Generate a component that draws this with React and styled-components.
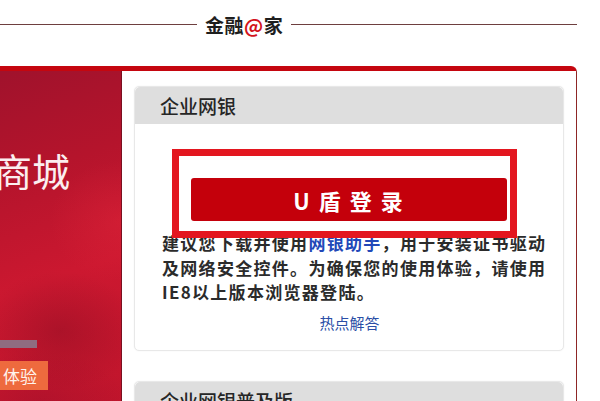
import styled, { createGlobalStyle } from "styled-components";

const GlobalStyle = createGlobalStyle`
  html, body {
    margin: 0;
    padding: 0;
    background: #ffffff;
    overflow: hidden;
  }
  body {
    font-family: "Noto Sans CJK SC", "Noto Sans", sans-serif;
  }
`;

export default function App() {
  return (
    <>
      <GlobalStyle />
      <Page>
        <TopTitle>
          <Rule />
          <TitleText>
            金融<At>@</At>家
          </TitleText>
          <Rule />
        </TopTitle>
        <Frame>
          <Banner>
            <BannerTitle>商城</BannerTitle>
            <BannerBar />
            <TryButton>体验</TryButton>
          </Banner>
          <Side>
            <Card>
              <CardHead>企业网银</CardHead>
              <CardBody>
                <LoginButton type="button">U 盾 登 录</LoginButton>
                <Notice>
                  建议您下载并使用<Link>网银助手</Link>，用于安装证书驱动及网络安全控件。为确保您的使用体验，请使用IE8以上版本浏览器登陆。
                </Notice>
                <Faq>热点解答</Faq>
              </CardBody>
              <Highlight />
            </Card>
            <Card>
              <CardHead>企业网银普及版</CardHead>
            </Card>
          </Side>
        </Frame>
      </Page>
    </>
  );
}

const Page = styled.div`
  width: 600px;
  height: 401px;
  overflow: hidden;
`;

const TopTitle = styled.div`
  display: flex;
  align-items: center;
  gap: 8px;
  height: 48px;
  width: 577px;
  margin-bottom: 18px;
`;

const Rule = styled.div`
  flex: 1;
  height: 1px;
  background: #6e3f3f;
  &:first-child {
    flex: 0 0 197px;
  }
`;

const TitleText = styled.div`
  font-size: 19px;
  font-weight: 700;
  color: #1e1e1e;
  letter-spacing: 0.5px;
`;

const At = styled.span`
  color: #d3141c;
`;

const Frame = styled.div`
  display: flex;
  width: 576px;
  height: 335px;
  border-top: 5px solid #c5060f;
  border-right: 1px solid #8e2626;
  border-top-right-radius: 6px;
`;

const Banner = styled.div`
  flex: 0 0 122px;
  display: flex;
  flex-direction: column;
  background:
    radial-gradient(ellipse 70px 60px at 120px 150px, rgba(230, 40, 60, 0.35), transparent),
    radial-gradient(ellipse 80px 60px at 60px 260px, rgba(120, 10, 30, 0.35), transparent),
    radial-gradient(ellipse 90px 50px at 40px 330px, rgba(140, 10, 40, 0.3), transparent),
    linear-gradient(160deg, #a0122c 0%, #b5142c 30%, #cc1830 60%, #c0152c 100%);
  border-right: 1px solid #7a1020;
  box-sizing: border-box;
  overflow: hidden;
`;

const BannerTitle = styled.div`
  margin: 75px 0 0 -6px;
  font-size: 38px;
  line-height: 48px;
  color: #fbeef0;
  white-space: nowrap;
`;

const BannerBar = styled.div`
  margin-top: 146px;
  width: 37px;
  height: 8px;
  background: #8f6c80;
`;

const TryButton = styled.div`
  margin-top: 13px;
  width: 48px;
  height: 29px;
  background: #ee6a3e;
  color: #fff4ee;
  font-size: 17px;
  line-height: 29px;
  padding-left: 3px;
  box-sizing: border-box;
`;

const Side = styled.div`
  flex: 1;
  display: flex;
  flex-direction: column;
  gap: 30px;
  padding: 15px 12px 0 12px;
  background: #ffffff;
`;

const Card = styled.div`
  position: relative;
  border: 1px solid #e8e8e8;
  border-radius: 5px;
  box-shadow: 0 0 2px rgba(0, 0, 0, 0.06);
  background: #ffffff;
`;

const CardHead = styled.div`
  height: 37px;
  padding-left: 25px;
  background: #dedede;
  border-radius: 5px 5px 0 0;
  font-size: 19px;
  font-weight: 500;
  line-height: 37px;
  color: #262626;
`;

const CardBody = styled.div`
  display: flex;
  flex-direction: column;
  align-items: flex-start;
  padding: 54px 0 16px 27px;
`;

const LoginButton = styled.button`
  margin-left: 29px;
  width: 316px;
  height: 43px;
  border: 0;
  border-radius: 3px;
  background: #c4000b;
  color: #ffffff;
  font-family: "Noto Sans CJK SC", sans-serif;
  font-size: 22px;
  font-weight: 700;
  letter-spacing: 2px;
  padding-left: 6px;
`;

const Notice = styled.p`
  margin: 10px 0 0 0;
  width: 392px;
  font-size: 17px;
  line-height: 24.5px;
  font-weight: 700;
  letter-spacing: 1.3px;
  color: #2b2b2b;
`;

const Link = styled.span`
  color: #2248b8;
`;

const Faq = styled.div`
  align-self: center;
  margin: 7px 0 0 -26px;
  font-size: 15px;
  line-height: 22px;
  color: #2a4ea6;
`;

const Highlight = styled.div`
  position: absolute;
  left: 37px;
  top: 62px;
  width: 345px;
  height: 89px;
  border: 7px solid #e3161f;
  box-sizing: border-box;
  pointer-events: none;
`;
